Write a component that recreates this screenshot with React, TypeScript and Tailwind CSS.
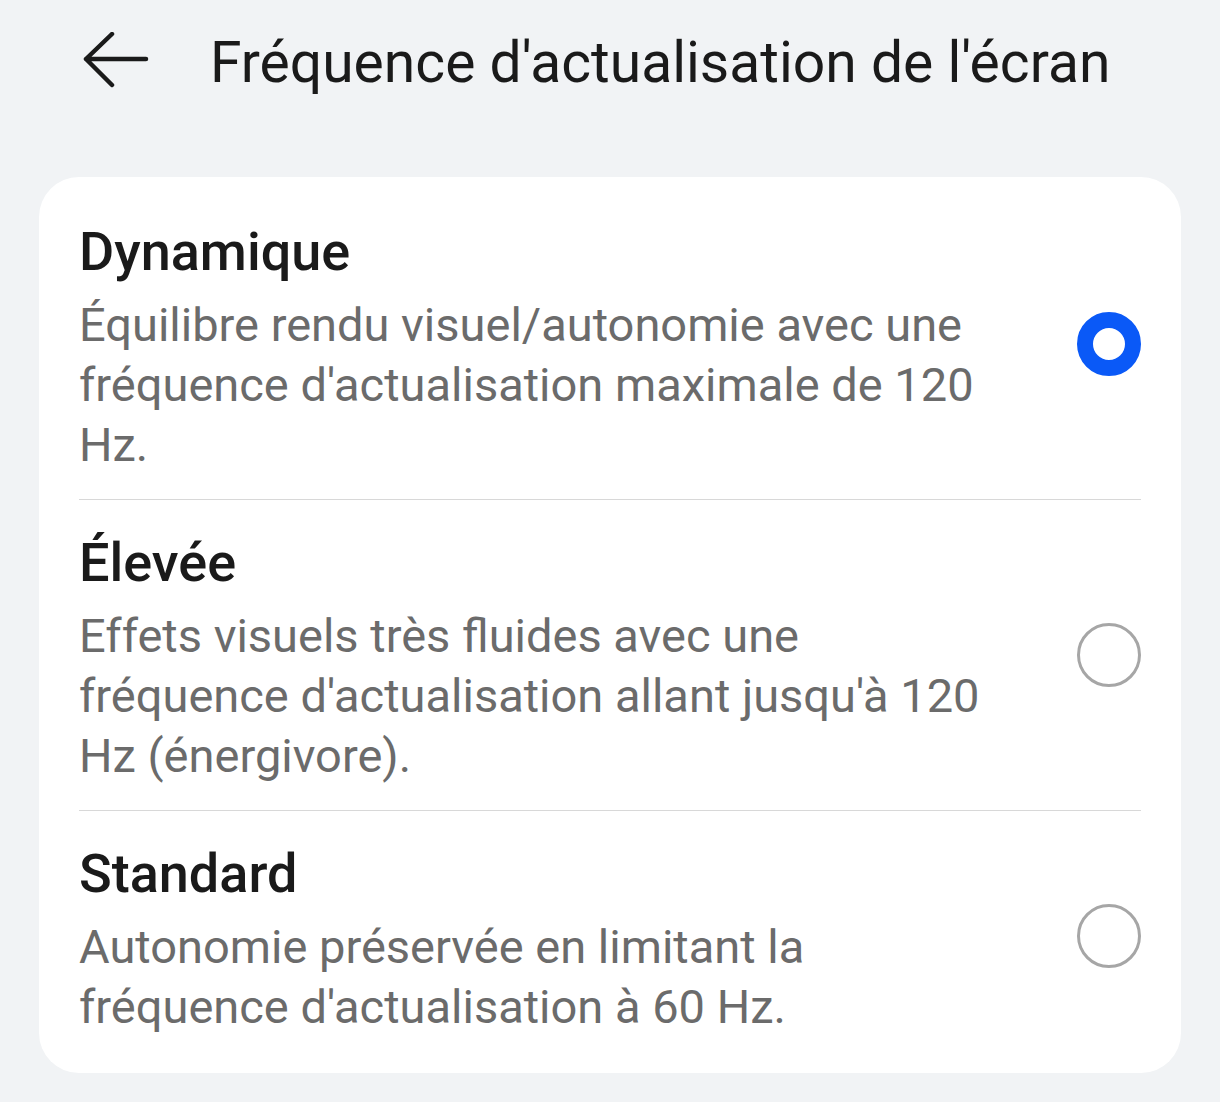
import { useState } from 'react';

const options = [
  {
    id: 'dynamic',
    title: 'Dynamique',
    lines: [
      'Équilibre rendu visuel/autonomie avec une',
      "fréquence d'actualisation maximale de 120",
      'Hz.',
    ],
  },
  {
    id: 'high',
    title: 'Élevée',
    lines: [
      'Effets visuels très fluides avec une',
      "fréquence d'actualisation allant jusqu'à 120",
      'Hz (énergivore).',
    ],
  },
  {
    id: 'standard',
    title: 'Standard',
    lines: ['Autonomie préservée en limitant la', "fréquence d'actualisation à 60 Hz."],
  },
];

function BackArrow() {
  return (
    <svg width="68" height="60" viewBox="0 0 68 60" fill="none">
      <path
        d="M5 27 H65 M5 27 L31 2 M5 27 L31 53"
        stroke="#1a1a1a"
        strokeWidth="4.5"
        strokeLinecap="round"
        strokeLinejoin="round"
      />
    </svg>
  );
}

function Radio({ checked }: { checked: boolean }) {
  if (checked) {
    return <div className="h-[64px] w-[64px] shrink-0 rounded-full border-[16px] border-[#0a59f7] bg-white" />;
  }
  return <div className="h-[64px] w-[64px] shrink-0 rounded-full border-[3px] border-[#a6a6a6] bg-white" />;
}

export default function App() {
  const [selected, setSelected] = useState('dynamic');

  return (
    <div
      className="min-h-[1102px] w-[1220px] bg-[#f1f3f5] text-[#1a1a1a]"
      style={{ fontFamily: 'Roboto, "Noto Sans", sans-serif' }}
    >
      {/* Header */}
      <div className="flex h-[124px] items-center pl-[81px]">
        <BackArrow />
        <h1 className="ml-[61px] text-[57px] leading-none font-normal">
          Fréquence d'actualisation de l'écran
        </h1>
      </div>

      {/* Options card */}
      <div className="mx-[39px] mt-[53px] rounded-[40px] bg-white px-[40px] py-[12px]">
        {options.map((opt, i) => (
          <div
            key={opt.id}
            onClick={() => setSelected(opt.id)}
            className={`flex items-center justify-between ${
              i < options.length - 1 ? 'border-b border-[#d8d8d8]' : ''
            }`}
          >
            <div className="pt-[33px] pb-[24px]">
              <div className="text-[54px] leading-[60px] font-medium">{opt.title}</div>
              <div className="mt-[13px] text-[47px] leading-[60px] text-[#6b6b6b]">
                {opt.lines.map((l, j) => (
                  <div key={j}>{l}</div>
                ))}
              </div>
            </div>
            <Radio checked={selected === opt.id} />
          </div>
        ))}
      </div>
    </div>
  );
}
